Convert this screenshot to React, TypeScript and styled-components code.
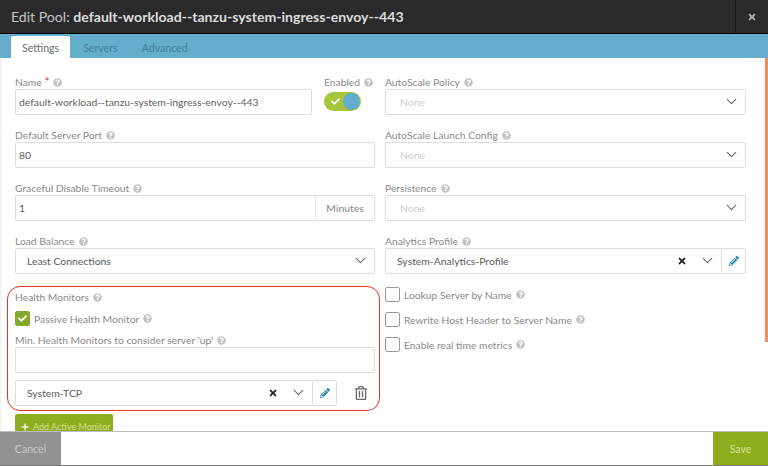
import React from 'react';
import styled, { createGlobalStyle } from 'styled-components';
import { ChevronDown } from 'lucide-react';
import { FaCheck, FaPencilAlt, FaPlus, FaQuestionCircle, FaRegTrashAlt, FaTimes } from 'react-icons/fa';

const GlobalStyle = createGlobalStyle`
  html, body { margin: 0; padding: 0; height: 466px; overflow: hidden; background: #fff; }
  body { font-family: Lato, "Liberation Sans", sans-serif; }
  * { box-sizing: border-box; }
`;

const Modal = styled.div`
  width: 768px;
  height: 466px;
  display: flex;
  flex-direction: column;
  overflow: hidden;
`;

const Header = styled.header`
  height: 34px;
  flex: none;
  display: flex;
  background: #2a2a2c;
  border-bottom: 1px solid #000;
`;

const Title = styled.h1`
  flex: 1;
  margin: 0;
  padding-left: 11px;
  font-size: 14.1px;
  line-height: 33px;
  font-weight: 400;
  color: #c4c4c4;
  white-space: nowrap;
  b { font-weight: 700; color: #dcdcdc; }
`;

const CloseButton = styled.div`
  width: 33px;
  display: flex;
  align-items: center;
  justify-content: center;
  border-left: 1px solid #151515;
  color: #b4b4b4;
  font-size: 10px;
`;

const TabBar = styled.nav`
  height: 24px;
  flex: none;
  display: flex;
  align-items: flex-end;
  padding-left: 11px;
  background: #65aecb;
`;

const Tab = styled.div<{ $active?: boolean }>`
  height: 22px;
  padding: 0 11px;
  margin-right: 2px;
  font-size: 10.6px;
  line-height: 24px;
  color: ${p => (p.$active ? '#6f6f6f' : '#3f7f9c')};
  background: ${p => (p.$active ? '#fff' : 'transparent')};
  border-radius: 2px 2px 0 0;
`;

const Body = styled.main`
  position: relative;
  flex: 1;
  min-height: 0;
  overflow: hidden;
  display: grid;
  grid-template-columns: 359px 360px;
  column-gap: 11px;
  align-content: start;
  padding: 17px 0 0 15px;
  border-left: 1px solid #f0f0f0;
`;

const ScrollThumb = styled.div`
  position: absolute;
  top: 0;
  right: 0;
  width: 3px;
  height: 284px;
  background: #f08d68;
`;

const Column = styled.div`
  display: flex;
  flex-direction: column;
  margin-left: -1px;
`;

const Field = styled.div<{ $width?: number }>`
  margin-bottom: 13px;
  ${p => (p.$width ? `width: ${p.$width}px; flex: none;` : '')}
`;

const NameRow = styled.div`
  display: flex;
  gap: 12px;
`;

const LabelText = styled.div`
  height: 14px;
  display: flex;
  align-items: center;
  gap: 4px;
  font-size: 10.3px;
  line-height: 14px;
  color: #8a8a8a;
  white-space: nowrap;
  svg { color: #c2c2c2; font-size: 9px; }
`;

const Required = styled.span`
  color: #e8243c;
  font-size: 11px;
  margin-left: -1px;
`;

const Control = styled.div`
  height: 26px;
  display: flex;
  align-items: center;
  padding-bottom: 1px;
  border: 1px solid #dedede;
  border-radius: 2px;
  background: #fff;
  font-size: 10.4px;
  color: #5f5f5f;
`;

const TextValue = styled.div`
  flex: 1;
  padding-left: 3px;
  white-space: nowrap;
`;

const SelectValue = styled.div<{ $muted?: boolean }>`
  flex: 1;
  padding-left: ${p => (p.$muted ? 14 : 11)}px;
  color: ${p => (p.$muted ? '#cdcdcd' : '#5a5a5a')};
  white-space: nowrap;
`;

const Addon = styled.div`
  width: 59px;
  height: 100%;
  flex: none;
  display: flex;
  align-items: center;
  justify-content: center;
  border-left: 1px solid #e4e4e4;
  color: #858585;
`;

const Chevron = styled(ChevronDown)`
  width: 17px;
  height: 17px;
  margin-right: 5px;
  color: #666;
  stroke-width: 1.5;
  flex: none;
`;

const Clear = styled(FaTimes)`
  font-size: 10px;
  color: #222;
  margin-right: 12px;
  flex: none;
`;

const EditButton = styled.div`
  width: 24px;
  height: 100%;
  flex: none;
  display: flex;
  align-items: center;
  justify-content: center;
  border-left: 1px solid #dedede;
  color: #2f8db3;
  font-size: 10px;
`;

const Toggle = styled.div`
  width: 37px;
  height: 19px;
  margin-top: 3px;
  display: flex;
  align-items: center;
  justify-content: space-between;
  padding: 0 1px 0 7px;
  border-radius: 10px;
  background: #a5c63b;
  color: #fff;
  font-size: 9px;
`;

const Knob = styled.span`
  width: 17px;
  height: 17px;
  border-radius: 50%;
  background: #64abd0;
`;

const HealthGroup = styled.section`
  position: relative;
  margin-top: 3px;
`;

const Highlight = styled.div`
  position: absolute;
  top: -4px;
  left: -8px;
  width: 373px;
  height: 125px;
  border: 1.5px solid #ee3124;
  border-radius: 13px;
  pointer-events: none;
`;

const CheckRow = styled.div<{ $top?: number; $space?: number }>`
  height: 15px;
  display: flex;
  align-items: center;
  gap: 4px;
  margin-top: ${p => p.$top ?? 0}px;
  margin-bottom: ${p => p.$space ?? 10}px;
  font-size: 10.3px;
  color: #8a8a8a;
  white-space: nowrap;
  svg.help { color: #c2c2c2; font-size: 9px; }
`;

const Box = styled.span<{ $checked?: boolean }>`
  width: 15px;
  height: 15px;
  flex: none;
  display: flex;
  align-items: center;
  justify-content: center;
  border-radius: 2px;
  border: 1px solid ${p => (p.$checked ? '#85a92a' : '#9a9a9a')};
  background: ${p => (p.$checked ? '#85a92a' : '#fff')};
  color: #fff;
  font-size: 9px;
`;

const MonitorRow = styled.div`
  display: flex;
  align-items: center;
  margin-top: -6px;
`;

const MonitorSelect = styled(Control)`
  width: 322px;
  flex: none;
`;

const TrashButton = styled.div`
  margin-left: 17px;
  color: #6a6a6a;
  font-size: 14px;
  display: flex;
`;

const AddButton = styled.div`
  width: 98px;
  height: 26px;
  margin-top: 8px;
  display: flex;
  align-items: flex-start;
  gap: 4px;
  padding: 7px 0 0 6px;
  border-radius: 2px;
  background: #8fae1f;
  color: #cfe08e;
  font-size: 9px;
  white-space: nowrap;
  svg { flex: none; color: #f3f6e4; font-size: 8px; margin-top: 2px; }
`;

const Footer = styled.footer`
  height: 35px;
  flex: none;
  display: flex;
  justify-content: space-between;
  background: #fff;
  border-top: 1px solid #bdbdbd;
  border-bottom: 1px solid #777;
`;

const FooterButton = styled.div<{ $save?: boolean }>`
  width: ${p => (p.$save ? 55 : 61)}px;
  display: flex;
  align-items: center;
  justify-content: center;
  font-size: 10.6px;
  background: ${p => (p.$save ? '#8fae1f' : '#929292')};
  color: ${p => (p.$save ? '#d5e39d' : '#c9c9c9')};
`;

const Help = () => <FaQuestionCircle className="help" />;

const Label: React.FC<{ text: string; required?: boolean }> = ({ text, required }) => (
  <LabelText>
    {text}
    {required && <Required>*</Required>}
    <Help />
  </LabelText>
);

const Select: React.FC<{ label: string; value: string; muted?: boolean }> = ({ label, value, muted }) => (
  <Field>
    <Label text={label} />
    <Control>
      <SelectValue $muted={muted}>{value}</SelectValue>
      <Chevron />
    </Control>
  </Field>
);

const Check: React.FC<{ text: string; checked?: boolean; top?: number; space?: number }> = ({ text, checked, top, space }) => (
  <CheckRow $top={top} $space={space}>
    <Box $checked={checked}>{checked && <FaCheck />}</Box>
    {text}
    <Help />
  </CheckRow>
);

export default function App() {
  return (
    <Modal>
      <GlobalStyle />
      <Header>
        <Title>
          Edit Pool: <b>default-workload--tanzu-system-ingress-envoy--443</b>
        </Title>
        <CloseButton>
          <FaTimes />
        </CloseButton>
      </Header>
      <TabBar>
        <Tab $active>Settings</Tab>
        <Tab>Servers</Tab>
        <Tab>Advanced</Tab>
      </TabBar>
      <Body>
        <Column>
          <NameRow>
            <Field $width={297}>
              <Label text="Name" required />
              <Control>
                <TextValue>default-workload--tanzu-system-ingress-envoy--443</TextValue>
              </Control>
            </Field>
            <Field>
              <Label text="Enabled" />
              <Toggle>
                <FaCheck />
                <Knob />
              </Toggle>
            </Field>
          </NameRow>
          <Field>
            <Label text="Default Server Port" />
            <Control>
              <TextValue>80</TextValue>
            </Control>
          </Field>
          <Field>
            <Label text="Graceful Disable Timeout" />
            <Control>
              <TextValue>1</TextValue>
              <Addon>Minutes</Addon>
            </Control>
          </Field>
          <Select label="Load Balance" value="Least Connections" />
          <HealthGroup>
            <Highlight />
            <Label text="Health Monitors" />
            <Check text="Passive Health Monitor" checked top={7} space={7} />
            <Field>
              <Label text="Min. Health Monitors to consider server 'up'" />
              <Control />
            </Field>
            <MonitorRow>
              <MonitorSelect>
                <SelectValue>System-TCP</SelectValue>
                <Clear />
                <Chevron />
                <EditButton>
                  <FaPencilAlt />
                </EditButton>
              </MonitorSelect>
              <TrashButton>
                <FaRegTrashAlt />
              </TrashButton>
            </MonitorRow>
            <AddButton>
              <FaPlus />
              Add Active Monitor
            </AddButton>
          </HealthGroup>
        </Column>
        <Column>
          <Select label="AutoScale Policy" value="None" muted />
          <Select label="AutoScale Launch Config" value="None" muted />
          <Select label="Persistence" value="None" muted />
          <Field>
            <Label text="Analytics Profile" />
            <Control>
              <SelectValue>System-Analytics-Profile</SelectValue>
              <Clear />
              <Chevron />
              <EditButton>
                <FaPencilAlt />
              </EditButton>
            </Control>
          </Field>
          <Check text="Lookup Server by Name" />
          <Check text="Rewrite Host Header to Server Name" />
          <Check text="Enable real time metrics" />
        </Column>
        <ScrollThumb />
      </Body>
      <Footer>
        <FooterButton>Cancel</FooterButton>
        <FooterButton $save>Save</FooterButton>
      </Footer>
    </Modal>
  );
}
